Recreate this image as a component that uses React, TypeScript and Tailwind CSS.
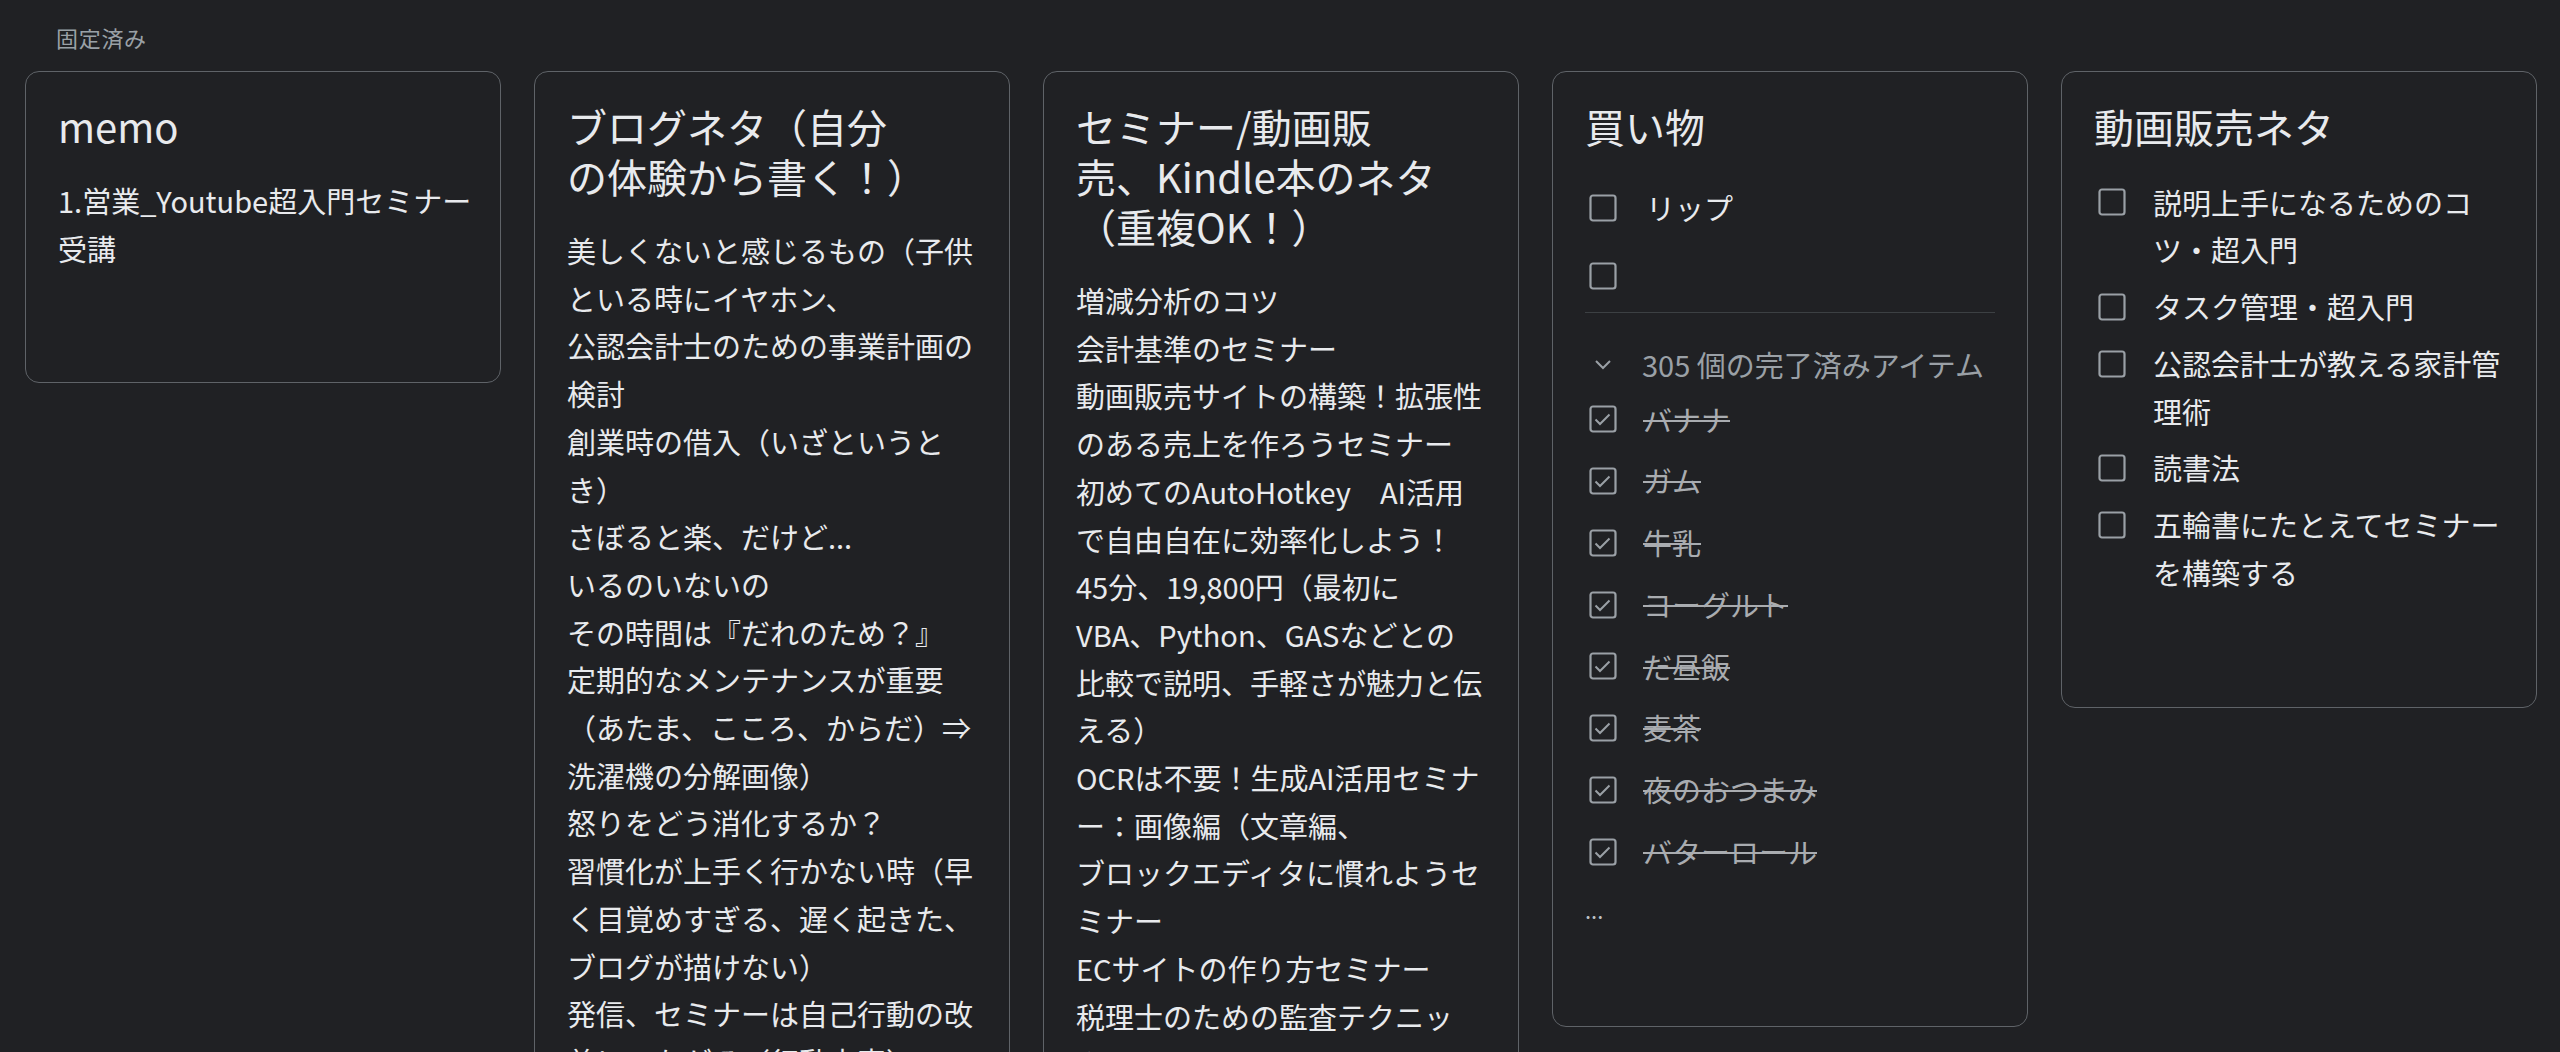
import React from 'react'

const blogLines = [
  '美しくないと感じるもの（子供',
  'といる時にイヤホン、',
  '公認会計士のための事業計画の',
  '検討',
  '創業時の借入（いざというと',
  'き）',
  'さぼると楽、だけど...',
  'いるのいないの',
  'その時間は『だれのため？』',
  '定期的なメンテナンスが重要',
  '（あたま、こころ、からだ）⇒',
  '洗濯機の分解画像）',
  '怒りをどう消化するか？',
  '習慣化が上手く行かない時（早',
  'く目覚めすぎる、遅く起きた、',
  'ブログが描けない）',
  '発信、セミナーは自己行動の改',
  '善につながる（行動変容）',
]

const seminarLines = [
  '増減分析のコツ',
  '会計基準のセミナー',
  '動画販売サイトの構築！拡張性',
  'のある売上を作ろうセミナー',
  '初めてのAutoHotkey　AI活用',
  'で自由自在に効率化しよう！',
  '45分、19,800円（最初に',
  'VBA、Python、GASなどとの',
  '比較で説明、手軽さが魅力と伝',
  'える）',
  'OCRは不要！生成AI活用セミナ',
  'ー：画像編（文章編、',
  'ブロックエディタに慣れようセ',
  'ミナー',
  'ECサイトの作り方セミナー',
  '税理士のための監査テクニッ',
  'ク',
]

const doneItems = ['バナナ', 'ガム', '牛乳', 'ヨーグルト', 'だ昼飯', '麦茶', '夜のおつまみ', 'バターロール']

const videoItems = [
  ['説明上手になるためのコ', 'ツ・超入門'],
  ['タスク管理・超入門'],
  ['公認会計士が教える家計管', '理術'],
  ['読書法'],
  ['五輪書にたとえてセミナー', 'を構築する'],
]

function Box({ checked = false }: { checked?: boolean }) {
  return (
    <svg width="36" height="36" viewBox="0 0 36 36" className="shrink-0">
      <rect x="5.5" y="5.5" width="25" height="25" rx="2.5" fill="none" stroke="#9aa0a6" strokeWidth="2.2" />
      {checked && (
        <polyline points="10.5,18.5 15,23 24.5,13.5" fill="none" stroke="#9aa0a6" strokeWidth="2" />
      )}
    </svg>
  )
}

function Card({ children, className = '' }: { children: React.ReactNode; className?: string }) {
  return (
    <div className={'w-[476px] shrink-0 rounded-[14px] border border-[#5f6368] px-[32px] ' + className}>
      {children}
    </div>
  )
}

function Title({ lines }: { lines: string[] }) {
  return (
    <div className="text-[40px] leading-[50px] text-[#e8eaed]">
      {lines.map((l, i) => (
        <div key={i} className="whitespace-nowrap">{l}</div>
      ))}
    </div>
  )
}

function Body({ lines }: { lines: string[] }) {
  return (
    <div className="mt-[26px] text-[29px] leading-[47.7px] text-[#e8eaed]">
      {lines.map((l, i) => (
        <div key={i} className="whitespace-nowrap">{l}</div>
      ))}
    </div>
  )
}

export default function App() {
  return (
    <div className="h-[1052px] w-[2560px] overflow-hidden bg-[#202124] font-['Noto_Sans_CJK_JP','Noto_Sans',sans-serif]">
      {/* Pinned label */}
      <div className="h-[71px] pl-[56px] pt-[22px] text-[22px] leading-[30px] tracking-[0.7px] text-[#9aa0a6]">
        固定済み
      </div>

      <div className="flex items-start gap-[33px] pl-[25px]">
        {/* memo */}
        <Card className="pt-[29px] pb-[110px]">
          <Title lines={['memo']} />
          <Body lines={['1.営業_Youtube超入門セミナー', '受講']} />
        </Card>

        {/* Blog ideas */}
        <Card className="pt-[29px] pb-[40px]">
          <Title lines={['ブログネタ（自分', 'の体験から書く！）']} />
          <Body lines={blogLines} />
        </Card>

        {/* Seminar ideas */}
        <Card className="pt-[29px] pb-[40px]">
          <Title lines={['セミナー/動画販', '売、Kindle本のネタ', '（重複OK！）']} />
          <Body lines={seminarLines} />
        </Card>

        {/* Shopping */}
        <Card className="pt-[29px] pb-[93px]">
          <Title lines={['買い物']} />
          <div className="mt-[23px] text-[29px] leading-[47.7px]">
            <div className="flex h-[68px] items-center">
              <Box />
              <span className="ml-[25px] text-[#e8eaed]">リップ</span>
            </div>
            <div className="flex h-[68px] items-center">
              <Box />
            </div>
            <div className="mt-[1.5px] h-px bg-[#3c4043]" />
            <div className="mt-[28px] flex h-[48px] items-center text-[#9aa0a6]">
              <div className="flex w-[36px] justify-center">
                <svg width="18" height="11" viewBox="0 0 18 11">
                  <polyline points="2,2 9,9 16,2" fill="none" stroke="#9aa0a6" strokeWidth="2" />
                </svg>
              </div>
              <span className="ml-[21px]">305 個の完了済みアイテム</span>
            </div>
            {doneItems.map((t) => (
              <div key={t} className="flex h-[61.75px] items-center">
                <Box checked />
                <span className="ml-[22px] text-[#a9acb0] line-through decoration-[#a9acb0] decoration-2">{t}</span>
              </div>
            ))}
            <div className="mt-[3px] text-[22px] leading-[47px] text-[#bdc1c6]">...</div>
          </div>
        </Card>

        {/* Video sales ideas */}
        <Card className="pt-[29px] pb-[106px]">
          <Title lines={['動画販売ネタ']} />
          <div className="mt-[23px] text-[29px] leading-[47.7px] text-[#e8eaed]">
            {videoItems.map((lines, i) => (
              <div key={i} className="flex items-start py-[4.55px]">
                <div className="flex h-[47.7px] items-center">
                  <Box />
                </div>
                <div className="ml-[23px]">
                  {lines.map((l, j) => (
                    <div key={j} className="whitespace-nowrap">{l}</div>
                  ))}
                </div>
              </div>
            ))}
          </div>
        </Card>
      </div>
    </div>
  )
}
